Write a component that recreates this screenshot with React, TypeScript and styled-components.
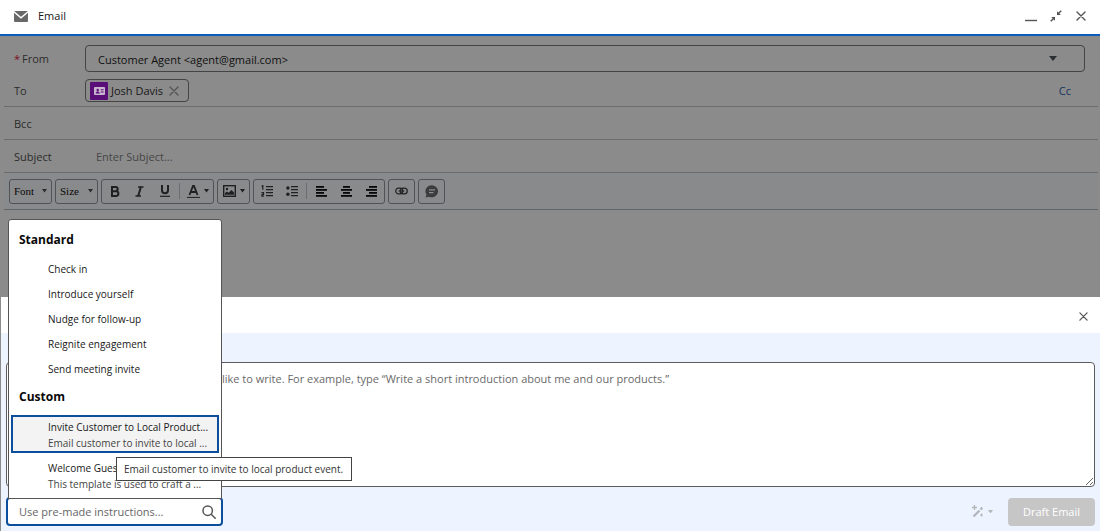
import React from "react";
import styled, { createGlobalStyle, css } from "styled-components";

const GlobalStyle = createGlobalStyle`
  *, *::before, *::after { box-sizing: border-box; }
  body {
    margin: 0;
    font-family: "Open Sans", "Noto Sans", sans-serif;
    font-size: 11px;
    line-height: 16px;
    color: #181818;
  }
  button, input, textarea, select { font: inherit; color: inherit; margin: 0; }
`;

const Composer = styled.main`
  display: flex;
  flex-direction: column;
  min-height: 100vh;
  background: #8b8b8b;
`;

const TitleBar = styled.header`
  display: flex;
  align-items: center;
  height: 36px;
  padding: 0 13px 2px 14px;
  background: #fff;
  border-bottom: 2px solid #0b5cbb;
`;

const Title = styled.h1`
  flex: 1;
  margin: 0 0 0 10px;
  font-size: 11px;
  font-weight: 400;
`;

const IconButton = styled.button`
  display: flex;
  align-items: center;
  justify-content: center;
  width: 12px;
  height: 16px;
  padding: 0;
  border: 0;
  background: none;
  color: #555;
`;

const WindowActions = styled.div`
  display: flex;
  gap: 13px;
`;

const Fields = styled.div`
  display: flex;
  flex-direction: column;
  padding: 2px 2px 0 4px;
`;

const Row = styled.div<{ $height: number; $line?: boolean; $top?: number; $bottom?: number }>`
  display: grid;
  grid-template-columns: 81px 1fr auto;
  align-items: center;
  height: ${(p) => p.$height}px;
  padding: ${(p) => p.$top ?? 0}px 13px ${(p) => p.$bottom ?? 0}px 0;
  border-bottom: ${(p) => (p.$line ? "1px solid #6c6c6c" : "0")};
`;

const Label = styled.label`
  padding-left: 10px;
  color: #2c2c2c;
`;

const Required = styled.span`
  margin-right: 2px;
  color: #7d0d20;
`;

const Stack = styled.div`
  display: grid;
  align-items: center;
  > * { grid-area: 1 / 1; }
  > svg { justify-self: end; pointer-events: none; }
`;

const FromStack = styled(Stack)`
  color: #2b2e33;
  > svg { margin-right: 28px; }
`;

const FromSelect = styled.select`
  width: 100%;
  height: 27px;
  padding: 2px 12px 0;
  appearance: none;
  border: 1px solid #444;
  border-radius: 4px;
  background: transparent;
  color: #101010;
`;

const Pill = styled.span`
  justify-self: start;
  display: flex;
  align-items: center;
  height: 23px;
  padding: 0 8px 0 4px;
  border: 1px solid #444;
  border-radius: 4px;
`;

const PillIcon = styled.span`
  display: flex;
  align-items: center;
  justify-content: center;
  width: 18px;
  height: 18px;
  margin-right: 3px;
  border-radius: 1px;
  background: #5a0f78;
`;

const PillText = styled.span`
  margin-right: 5px;
`;

const CcLink = styled.a`
  margin-right: 14px;
  color: #12335c;
  text-decoration: none;
`;

const PlainInput = styled.input`
  width: 100%;
  padding: 0 11px;
  border: 0;
  outline: 0;
  background: transparent;
  &::placeholder { color: #474747; opacity: 1; }
`;

const Toolbar = styled.div`
  display: flex;
  align-items: center;
  gap: 3px;
  height: 37px;
  padding: 0 5px;
  background: #888a8c;
  border-bottom: 1px solid #626568;
`;

const groupFrame = css`
  height: 25px;
  border: 1px solid #505356;
  border-radius: 3px;
`;

const ToolGroup = styled.div`
  ${groupFrame}
  display: flex;
  align-items: center;
`;

const ToolStack = styled(Stack)`
  color: #2b2b2b;
  > svg { margin-right: 5px; }
`;

const ToolSelect = styled.select`
  ${groupFrame}
  width: 43px;
  padding: 0 4px;
  appearance: none;
  background: transparent;
  font-family: "Liberation Serif", serif;
  color: #080808;
`;

const ToolButton = styled.button<{ $wide?: boolean }>`
  display: flex;
  align-items: center;
  justify-content: center;
  gap: 4px;
  width: ${(p) => (p.$wide ? 31 : 25)}px;
  height: 23px;
  padding: 0;
  border: 0;
  background: none;
  color: #202020;
`;

const ToolDivider = styled.span`
  width: 1px;
  height: 16px;
  margin: 0 2px;
  background: #6b6e70;
`;

const Body = styled.textarea`
  flex: 1;
  width: 100%;
  min-height: 40px;
  border: 0;
  outline: 0;
  resize: none;
  background: transparent;
`;

const Assistant = styled.section`
  margin-left: 1px;
  background: #edf3ff;
`;

const AssistantHead = styled.div`
  display: flex;
  align-items: center;
  justify-content: flex-end;
  height: 36px;
  padding: 3px 11px 0 0;
  background: #fff;
`;

const AssistantBody = styled.div`
  display: flex;
  flex-direction: column;
  gap: 10px;
  padding: 29px 5px 5px;
`;

const Prompt = styled.textarea`
  display: block;
  width: 100%;
  height: 125px;
  padding: 8px 12px 8px 215px;
  border: 1px solid #5c5c5c;
  border-radius: 4px;
  outline: 0;
  background: #fff;
  &::placeholder { color: #6a6a6a; opacity: 1; }
`;

const Footer = styled.div`
  display: flex;
  align-items: center;
  justify-content: space-between;
`;

const FooterActions = styled.div`
  display: flex;
  align-items: center;
  gap: 15px;
`;

const WandButton = styled.button`
  display: flex;
  align-items: center;
  gap: 4px;
  padding: 0;
  border: 0;
  background: none;
  color: #b4b6bb;
`;

const DraftButton = styled.button`
  height: 28px;
  width: 87px;
  padding: 0;
  border: 0;
  border-radius: 4px;
  background: #c6c6c6;
  color: #fff;
`;

const Combo = styled.div`
  position: relative;
  display: flex;
  align-items: center;
  width: 217px;
  height: 29px;
  padding: 0 5px 0 11px;
  border: 2px solid #0b4f9c;
  border-radius: 4px;
  background: #fff;
  color: #555;
`;

const ComboInput = styled.input`
  flex: 1;
  min-width: 0;
  padding: 0;
  border: 0;
  outline: 0;
  background: transparent;
  &::placeholder { color: #666; opacity: 1; }
`;

const Menu = styled.div`
  position: absolute;
  left: 0;
  bottom: 100%;
  width: 214px;
  padding: 10px 2px 1px;
  border: 1px solid #555;
  border-radius: 3px 3px 0 0;
  background: #fff;
  color: #181818;
  font-size: 10px;
`;

const MenuHeading = styled.h2`
  margin: 0;
  padding: 0 8px;
  font-size: 12px;
  line-height: 20px;
  font-weight: 700;
  color: #080808;
`;

const Options = styled.div<{ $top: number; $bottom: number }>`
  display: flex;
  flex-direction: column;
  padding: ${(p) => p.$top}px 0 ${(p) => p.$bottom}px;
`;

const Option = styled.button`
  height: 25px;
  padding: 0 8px 0 37px;
  border: 0;
  background: none;
  text-align: left;
`;

const CustomOption = styled.div<{ $active?: boolean }>`
  position: relative;
  margin-bottom: 3px;
  border: 2px solid ${(p) => (p.$active ? "#0b4f9c" : "transparent")};
  background: ${(p) => (p.$active ? "#f3f3f3" : "transparent")};
`;

const CustomButton = styled.button`
  display: block;
  width: 100%;
  padding: 2px 0 0 35px;
  border: 0;
  background: none;
  text-align: left;
`;

const OptionLine = styled.span<{ $muted?: boolean }>`
  display: block;
  white-space: nowrap;
  color: ${(p) => (p.$muted ? "#444" : "#181818")};
`;

const Tooltip = styled.span`
  position: absolute;
  z-index: 2;
  top: 40px;
  left: 103px;
  padding: 1px 8px 1px 7px;
  border: 1px solid #444;
  background: #fff;
  color: #333;
  line-height: 20px;
  white-space: nowrap;
`;

const Caret = ({ size = 6 }: { size?: number }) => (
  <svg width={size} height={size / 2 + 1} viewBox="0 0 8 5" preserveAspectRatio="none" fill="currentColor" aria-hidden>
    <path d="M0 0h8L4 5z" />
  </svg>
);

const CloseIcon = ({ size = 10 }: { size?: number }) => (
  <svg width={size} height={size} viewBox="0 0 10 10" fill="none" stroke="currentColor" strokeWidth="1.4" strokeLinecap="round" aria-hidden>
    <path d="M1 1l8 8M9 1L1 9" />
  </svg>
);

const Lines = ({ rows }: { rows: [number, number][] }) => (
  <svg width="12" height="11" viewBox="0 0 12 11" fill="#080808" aria-hidden>
    {rows.map(([x, w], i) => (
      <rect key={i} x={x} y={i * 3} width={w} height="1.8" />
    ))}
  </svg>
);

const ListIcon = ({ numbered }: { numbered?: boolean }) => (
  <svg width="12" height="12" viewBox="0 0 12 12" fill="currentColor" aria-hidden>
    <path d="M5 1h7v1.2H5zM5 4h7v1.2H5zM5 7h7v1.2H5zM5 10h7v1.2H5z" />
    {numbered ? (
      <path d="M.6 1.4L1.8.6v4.200M.5 7.500h2v1.800H1v1.900h1.900" fill="none" stroke="currentColor" strokeWidth="1.200" />
    ) : (
      <>
        <circle cx="1.9" cy="3" r="1.7" />
        <circle cx="1.9" cy="9.2" r="1.7" />
      </>
    )}
  </svg>
);

const standard = ["Check in", "Introduce yourself", "Nudge for follow-up", "Reignite engagement", "Send meeting invite"];

export default function App() {
  return (
    <>
      <GlobalStyle />
      <Composer>
        <TitleBar>
          <svg width="14" height="11" viewBox="0 0 14 11" aria-hidden>
            <rect width="14" height="11" rx="1" fill="#686868" />
            <path d="M0 .8l7 6 7-6" fill="none" stroke="#fff" strokeWidth="1.4" />
          </svg>
          <Title>Email</Title>
          <WindowActions>
            <IconButton aria-label="Minimize">
              <svg width="12" height="12" viewBox="0 0 12 12" aria-hidden>
                <path d="M0 10.5h12" stroke="currentColor" strokeWidth="1.4" />
              </svg>
            </IconButton>
            <IconButton aria-label="Shrink">
              <svg width="12" height="12" viewBox="0 0 12 12" fill="currentColor" aria-hidden>
                <path d="M7 5V1.2l1.4 1.4L10.8.2l1 1-2.4 2.4L10.8 5zM5 7v3.8L3.6 9.4l-2.4 2.4-1-1 2.4-2.4L1.2 7z" />
              </svg>
            </IconButton>
            <IconButton aria-label="Close">
              <CloseIcon />
            </IconButton>
          </WindowActions>
        </TitleBar>

        <Fields>
          <Row $height={41}>
            <Label htmlFor="from"><Required>*</Required>From</Label>
            <FromStack>
              <FromSelect id="from">
                <option>Customer Agent &lt;agent@gmail.com&gt;</option>
              </FromSelect>
              <Caret size={8} />
            </FromStack>
          </Row>
          <Row $height={28} $bottom={4} $line>
            <Label as="span">To</Label>
            <Pill>
              <PillIcon>
                <svg width="11" height="8" viewBox="0 0 11 8" aria-hidden>
                  <rect width="11" height="8" rx="1" fill="#c9b6cf" />
                  <circle cx="3.7" cy="3" r="1.2" fill="#5a0f78" />
                  <path d="M1.7 6.4c0-2.6 4-2.6 4 0zM6.8 2.2h2.8v1H6.8zM6.8 4.4h2.8v1H6.8z" fill="#5a0f78" />
                </svg>
              </PillIcon>
              <PillText>Josh Davis</PillText>
              <IconButton aria-label="Remove Josh Davis"><CloseIcon /></IconButton>
            </Pill>
            <CcLink href="#cc">Cc</CcLink>
          </Row>
          <Row $height={33} $top={1} $line>
            <Label htmlFor="bcc">Bcc</Label>
            <PlainInput id="bcc" />
          </Row>
          <Row $height={33} $top={2} $line>
            <Label htmlFor="subject">Subject</Label>
            <PlainInput id="subject" placeholder="Enter Subject..." />
          </Row>
          <Toolbar role="toolbar" aria-label="Formatting">
            <ToolStack>
              <ToolSelect aria-label="Font"><option>Font</option></ToolSelect>
              <Caret size={5} />
            </ToolStack>
            <ToolStack>
              <ToolSelect aria-label="Size"><option>Size</option></ToolSelect>
              <Caret size={5} />
            </ToolStack>
            <ToolGroup>
              <ToolButton aria-label="Bold">
                <svg width="10" height="11" viewBox="0 0 10 11" fill="none" stroke="currentColor" strokeWidth="2" aria-hidden>
                  <path d="M2 1h3.6c2.8 0 2.8 4.2 0 4.2H2h4c3.2 0 3.2 4.8 0 4.8H2zM2 1v9" />
                </svg>
              </ToolButton>
              <ToolButton aria-label="Italic">
                <svg width="9" height="11" viewBox="0 0 9 11" fill="none" stroke="currentColor" aria-hidden>
                  <path d="M3 1h5.5M.5 10H6" strokeWidth="1.4" />
                  <path d="M5.9 1L3.2 10" strokeWidth="2" />
                </svg>
              </ToolButton>
              <ToolButton aria-label="Underline">
                <svg width="10" height="12" viewBox="0 0 10 12" fill="none" stroke="currentColor" aria-hidden>
                  <path d="M2 0v5.2c0 4 6 4 6 0V0" strokeWidth="2" />
                  <path d="M0 11.3h10" strokeWidth="1.2" />
                </svg>
              </ToolButton>
              <ToolDivider />
              <ToolButton $wide aria-label="Text colour">
                <svg width="13" height="13" viewBox="0 0 13 13" fill="none" stroke="currentColor" aria-hidden>
                  <path d="M2.5 10L6 1h1l3.500 9M4 7h5" strokeWidth="1.8" />
                  <path d="M0 12.4h13" strokeWidth="1" />
                </svg>
                <Caret size={5} />
              </ToolButton>
            </ToolGroup>
            <ToolGroup>
              <ToolButton $wide aria-label="Insert image">
                <svg width="13" height="12" viewBox="0 0 13 12" aria-hidden>
                  <rect x=".7" y=".7" width="11.6" height="10.6" fill="none" stroke="currentColor" strokeWidth="1.4" />
                  <circle cx="4" cy="4" r="1.2" fill="currentColor" />
                  <path d="M2 9.8V8l2-1.500 1.500 1.200L8.500 5 11 7.500v2.300z" fill="currentColor" />
                </svg>
                <Caret size={5} />
              </ToolButton>
            </ToolGroup>
            <ToolGroup>
              <ToolButton aria-label="Numbered list"><ListIcon numbered /></ToolButton>
              <ToolButton aria-label="Bulleted list"><ListIcon /></ToolButton>
              <ToolDivider />
              <ToolButton aria-label="Align left"><Lines rows={[[0, 8], [0, 11], [0, 8], [0, 11]]} /></ToolButton>
              <ToolButton aria-label="Align centre"><Lines rows={[[2, 7], [0, 11], [2, 7], [0, 11]]} /></ToolButton>
              <ToolButton aria-label="Align right"><Lines rows={[[3, 8], [0, 11], [3, 8], [0, 11]]} /></ToolButton>
            </ToolGroup>
            <ToolGroup>
              <ToolButton aria-label="Link">
                <svg width="13" height="8" viewBox="0 0 14 8" fill="none" stroke="currentColor" strokeWidth="1.3" aria-hidden>
                  <rect x=".8" y=".8" width="7.6" height="6.4" rx="3.2" />
                  <rect x="5.6" y=".8" width="7.6" height="6.4" rx="3.2" />
                  <path d="M4 4h6" />
                </svg>
              </ToolButton>
            </ToolGroup>
            <ToolGroup>
              <ToolButton aria-label="Quick text">
                <svg width="14" height="13" viewBox="0 0 14 13" aria-hidden>
                  <path d="M7 .3a6.3 6 0 1 1-3 11.4L.5 12.6l1-3A6.3 6 0 0 1 7 .3z" fill="#3c3c3c" />
                  <path d="M4 4.8h6M4 7.6h4.5" stroke="#8b8b8b" strokeWidth="1.2" />
                </svg>
              </ToolButton>
            </ToolGroup>
          </Toolbar>
        </Fields>

        <Body aria-label="Message body" />

        <Assistant>
          <AssistantHead>
            <IconButton aria-label="Close assistant"><CloseIcon size={9} /></IconButton>
          </AssistantHead>
          <AssistantBody>
            <Prompt
              aria-label="Instructions"
              placeholder={"like to write. For example, type “Write a short introduction about me and our products.”"}
            />
            <Footer>
              <Combo>
                <ComboInput aria-label="Pre-made instructions" placeholder="Use pre-made instructions..." />
                <svg width="14" height="14" viewBox="0 0 14 14" fill="none" stroke="currentColor" strokeWidth="1.5" strokeLinecap="round" aria-hidden>
                  <circle cx="5.7" cy="5.7" r="4.7" />
                  <path d="M9.2 9.2l4 4" />
                </svg>
                <Menu>
                  <MenuHeading>Standard</MenuHeading>
                  <Options $top={6} $bottom={6}>
                    {standard.map((name) => <Option key={name}>{name}</Option>)}
                  </Options>
                  <MenuHeading>Custom</MenuHeading>
                  <Options $top={8} $bottom={0}>
                    <CustomOption $active>
                      <CustomButton>
                        <OptionLine>Invite Customer to Local Product...</OptionLine>
                        <OptionLine $muted>Email customer to invite to local ...</OptionLine>
                      </CustomButton>
                      <Tooltip role="tooltip">Email customer to invite to local product event.</Tooltip>
                    </CustomOption>
                    <CustomOption>
                      <CustomButton>
                        <OptionLine>Welcome Guest</OptionLine>
                        <OptionLine $muted>This template is used to craft a ...</OptionLine>
                      </CustomButton>
                    </CustomOption>
                  </Options>
                </Menu>
              </Combo>
              <FooterActions>
                <WandButton aria-label="Rewrite options">
                  <svg width="13" height="13" viewBox="0 0 13 13" fill="none" stroke="currentColor" aria-hidden>
                    <path d="M2.5 11.5l6-6M9.500 4.500l1.800-1.800" strokeWidth="2.4" />
                    <path d="M3.5 0v5M1 2.500h5" strokeWidth="1.3" />
                    <path d="M10.5 8.500v3M9 10h3" strokeWidth="1" />
                  </svg>
                  <Caret size={5} />
                </WandButton>
                <DraftButton>Draft Email</DraftButton>
              </FooterActions>
            </Footer>
          </AssistantBody>
        </Assistant>
      </Composer>
    </>
  );
}
